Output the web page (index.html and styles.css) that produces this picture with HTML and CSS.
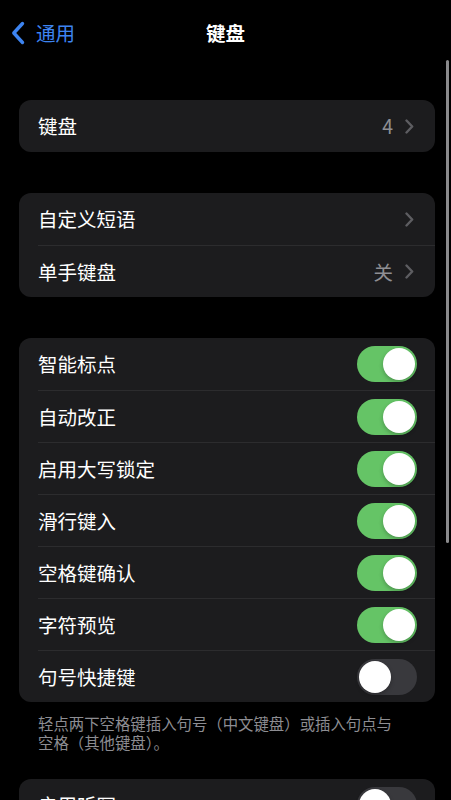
FILE: index.html
```html
<!DOCTYPE html>
<html lang="zh-CN">
<head>
<meta charset="utf-8">
<title>键盘</title>
<link rel="stylesheet" href="styles.css">
</head>
<body>
<div class="screen">
  <header class="nav">
    <div class="back">
      <svg class="back-icon" width="14" height="24" viewBox="0 0 14 24"><path d="M11.5 2.5 L2.8 12 L11.5 21.5" fill="none" stroke="#3d84f0" stroke-width="3.4" stroke-linecap="round" stroke-linejoin="round"/></svg>
      <span class="back-label">通用</span>
    </div>
    <div class="title">键盘</div>
    <div></div>
  </header>

  <main class="content">
    <section class="group">
      <div class="row">
        <span class="label">键盘</span>
        <span class="detail"><span class="value">4</span><svg class="chev" width="9" height="15" viewBox="0 0 9 15"><path d="M1.5 1.5 L7.2 7.5 L1.5 13.5" fill="none" stroke="#5d5d61" stroke-width="2.4" stroke-linecap="round" stroke-linejoin="round"/></svg></span>
      </div>
    </section>

    <section class="group">
      <div class="row">
        <span class="label">自定义短语</span>
        <span class="detail"><svg class="chev" width="9" height="15" viewBox="0 0 9 15"><path d="M1.5 1.5 L7.2 7.5 L1.5 13.5" fill="none" stroke="#5d5d61" stroke-width="2.4" stroke-linecap="round" stroke-linejoin="round"/></svg></span>
      </div>
      <div class="row">
        <span class="label">单手键盘</span>
        <span class="detail"><span class="value">关</span><svg class="chev" width="9" height="15" viewBox="0 0 9 15"><path d="M1.5 1.5 L7.2 7.5 L1.5 13.5" fill="none" stroke="#5d5d61" stroke-width="2.4" stroke-linecap="round" stroke-linejoin="round"/></svg></span>
      </div>
    </section>

    <section class="group">
      <div class="row toggle-row"><span class="label">智能标点</span><span class="switch on"><span class="knob"></span></span></div>
      <div class="row toggle-row"><span class="label">自动改正</span><span class="switch on"><span class="knob"></span></span></div>
      <div class="row toggle-row"><span class="label">启用大写锁定</span><span class="switch on"><span class="knob"></span></span></div>
      <div class="row toggle-row"><span class="label">滑行键入</span><span class="switch on"><span class="knob"></span></span></div>
      <div class="row toggle-row"><span class="label">空格键确认</span><span class="switch on"><span class="knob"></span></span></div>
      <div class="row toggle-row"><span class="label">字符预览</span><span class="switch on"><span class="knob"></span></span></div>
      <div class="row toggle-row"><span class="label">句号快捷键</span><span class="switch"><span class="knob"></span></span></div>
    </section>
    <p class="footnote">轻点两下空格键插入句号（中文键盘）或插入句点与空格（其他键盘）。</p>

    <section class="group last">
      <div class="row toggle-row"><span class="label">启用听写</span><span class="switch"><span class="knob"></span></span></div>
    </section>
  </main>

  <div class="scrollbar"></div>
</div>
</body>
</html>
```

FILE: styles.css
```css
html, body {
  margin: 0;
  padding: 0;
  background: #000;
}

body {
  font-family: "Noto Sans CJK SC", "Noto Sans", sans-serif;
  color: #fff;
  overflow: hidden;
}

.screen {
  position: relative;
  width: 451px;
  height: 800px;
  overflow: hidden;
}

.nav {
  height: 66px;
  display: grid;
  grid-template-columns: 1fr auto 1fr;
  align-items: center;
}

.back {
  display: flex;
  align-items: center;
  padding-left: 11px;
  gap: 11px;
}

.back-icon {
  display: block;
}

.back-label {
  color: #3d84f0;
  font-size: 19.5px;
  line-height: 24px;
}

.title {
  font-size: 19.5px;
  font-weight: 600;
  line-height: 24px;
}

.content {
  padding: 34px 16px 0 19px;
  display: flex;
  flex-direction: column;
}

.group {
  background: #1c1c1e;
  border-radius: 12px;
  margin-bottom: 41px;
  overflow: hidden;
}

.group.last {
  margin-top: 27px;
}

.row {
  height: 52px;
  box-sizing: border-box;
  display: flex;
  align-items: center;
  justify-content: space-between;
  margin-left: 19px;
  padding-right: 21px;
}

.row + .row {
  border-top: 1px solid #2c2c2e;
}

.toggle-row {
  padding-right: 18px;
}

.label {
  font-size: 19.5px;
  line-height: 24px;
}

.detail {
  display: flex;
  align-items: center;
  gap: 12px;
}

.value {
  color: #8e8e93;
  font-size: 19.5px;
  line-height: 24px;
}

.chev {
  display: block;
}

.switch {
  width: 60px;
  height: 36px;
  border-radius: 18px;
  background: #39393d;
  box-sizing: border-box;
  padding: 2px;
  display: flex;
  justify-content: flex-start;
}

.switch.on {
  background: #65c466;
  justify-content: flex-end;
}

.knob {
  width: 32px;
  height: 32px;
  border-radius: 50%;
  background: #fff;
  box-shadow: 0 2px 4px rgba(0, 0, 0, 0.25);
}

.footnote {
  margin: -29px 32px 0 19px;
  color: #8d8d92;
  font-size: 15.4px;
  line-height: 19px;
}

.scrollbar {
  position: absolute;
  right: 2px;
  top: 60px;
  width: 3px;
  height: 483px;
  border-radius: 2px;
  background: #8a8a8c;
}
```
